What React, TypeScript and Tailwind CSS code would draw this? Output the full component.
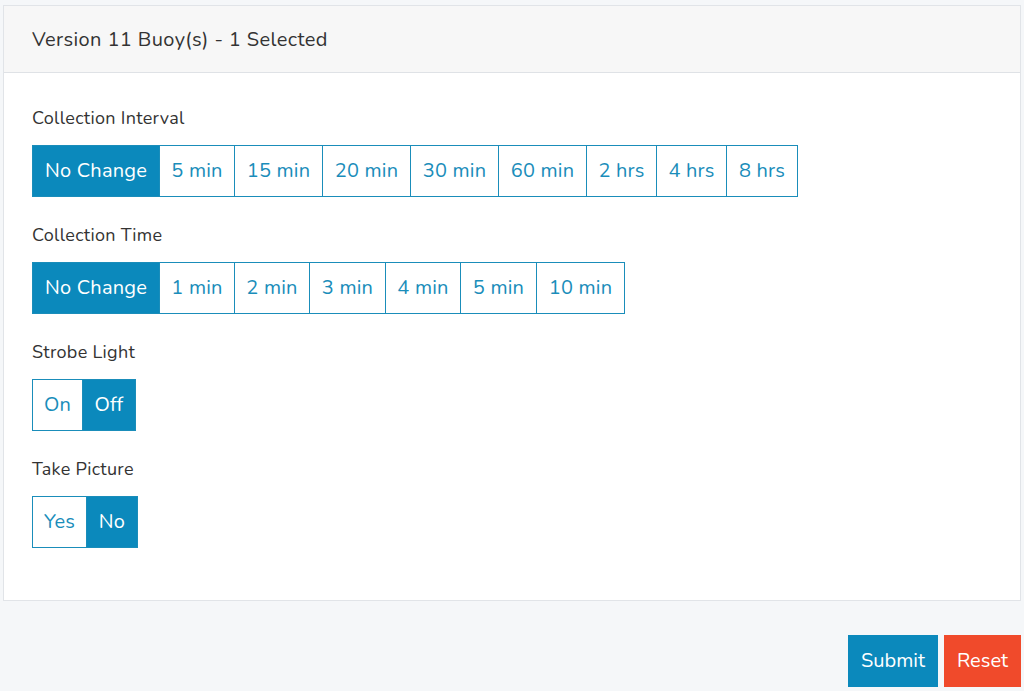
import { useState } from "react";

type Opt = { label: string; w: string };

// widths include the 1px shared border (groups overlap by -1px)
const INTERVALS: Opt[] = [
  { label: "No Change", w: "w-[128px]" },
  { label: "5 min", w: "w-[76px]" },
  { label: "15 min", w: "w-[89px]" },
  { label: "20 min", w: "w-[89px]" },
  { label: "30 min", w: "w-[89px]" },
  { label: "60 min", w: "w-[89px]" },
  { label: "2 hrs", w: "w-[71px]" },
  { label: "4 hrs", w: "w-[71px]" },
  { label: "8 hrs", w: "w-[72px]" },
];

const TIMES: Opt[] = [
  { label: "No Change", w: "w-[128px]" },
  { label: "1 min", w: "w-[76px]" },
  { label: "2 min", w: "w-[76px]" },
  { label: "3 min", w: "w-[77px]" },
  { label: "4 min", w: "w-[76px]" },
  { label: "5 min", w: "w-[77px]" },
  { label: "10 min", w: "w-[89px]" },
];

const STROBE: Opt[] = [
  { label: "On", w: "w-[51px]" },
  { label: "Off", w: "w-[54px]" },
];

const PICTURE: Opt[] = [
  { label: "Yes", w: "w-[55px]" },
  { label: "No", w: "w-[52px]" },
];

// segmented control, borders collapse like a bootstrap btn-group
function Group({ label, opts, initial }: { label: string; opts: Opt[]; initial: string }) {
  const [sel, setSel] = useState(initial);
  return (
    <div className="mb-[26px]">
      <div className="mb-[15px] text-[18px] leading-6 tracking-[0.3px] text-[#333]">{label}</div>
      <div className="flex">
        {opts.map((o, i) => {
          const on = o.label === sel;
          return (
            <button
              key={o.label}
              onClick={() => setSel(o.label)}
              className={`${o.w} h-[52px] border border-[#1a8dba] text-[20px] tracking-[0.2px] ${i > 0 ? "-ml-px" : ""} ${
                on ? "bg-[#0b89bc] text-white" : "bg-white text-[#1a8dba]"
              }`}
            >
              {o.label}
            </button>
          );
        })}
      </div>
    </div>
  );
}

export default function App() {
  return (
    <div className="h-[691px] overflow-hidden bg-[#f5f7f9] px-[3px] pt-[5px] font-['Nunito','Noto_Sans',sans-serif]">
      <div className="border border-[#e1e4e8] bg-white">
        <div className="flex h-[67px] items-center border-b border-[#dfe2e6] bg-[#f7f7f7] px-[28px] pt-[2px] text-[20px] tracking-[0.4px] text-[#333]">
          Version 11 Buoy(s) - 1 Selected
        </div>
        <div className="px-[28px] pt-[33px] pb-[26px]">
          <Group label="Collection Interval" opts={INTERVALS} initial="No Change" />
          <Group label="Collection Time" opts={TIMES} initial="No Change" />
          <Group label="Strobe Light" opts={STROBE} initial="Off" />
          <Group label="Take Picture" opts={PICTURE} initial="No" />
        </div>
      </div>
      <div className="mt-[34px] flex justify-end gap-[6px]">
        <button className="h-[52px] w-[90px] bg-[#0b89bc] text-[20px] text-white">Submit</button>
        <button className="h-[52px] w-[77px] bg-[#f04a2b] text-[20px] text-white">Reset</button>
      </div>
    </div>
  );
}
